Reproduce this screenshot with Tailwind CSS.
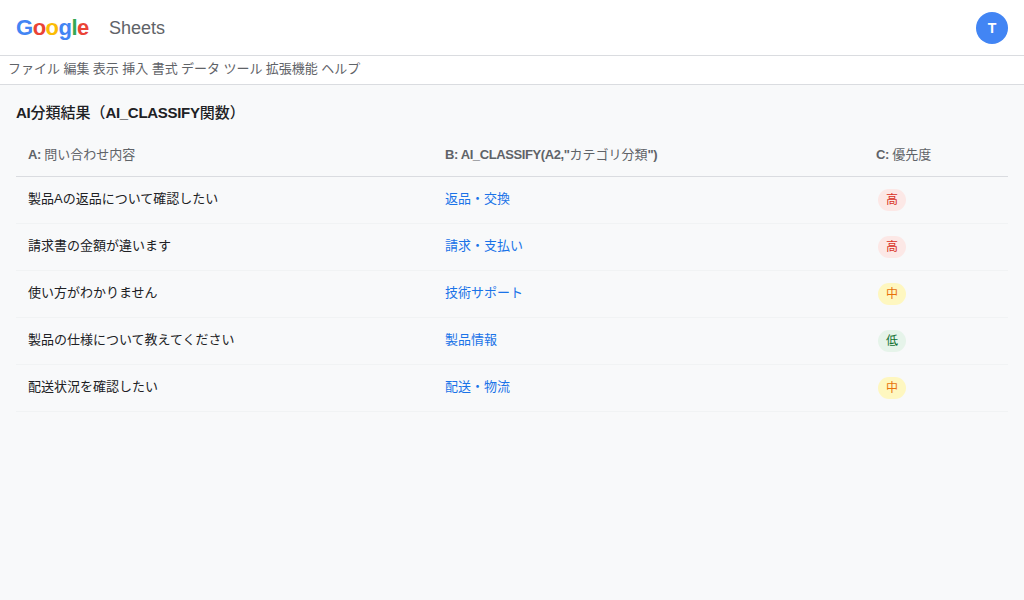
<!DOCTYPE html>
<html lang="ja">
<head>
    <meta charset="UTF-8">
    <meta name="viewport" content="width=device-width, initial-scale=1.0">
    <title>Google Sheets</title>
    <script src="https://cdn.jsdelivr.net/npm/@tailwindcss/browser@4"></script>
</head>
<body class="h-[600px] overflow-hidden bg-[#f8f9fa] font-['Liberation_Sans','Noto_Sans_CJK_JP',sans-serif]">
    <!-- Header -->
    <header class="flex h-14 items-center justify-between border-b border-[#dadce0] bg-white px-4">
        <div class="flex items-center">
            <div class="w-[73px] text-[22px] font-bold tracking-[-0.5px]">
                <span class="text-[#4285f4]">G</span><span class="text-[#ea4335]">o</span><span class="text-[#fbbc05]">o</span><span class="text-[#4285f4]">g</span><span class="text-[#34a853]">l</span><span class="text-[#ea4335]">e</span>
            </div>
            <span class="ml-5 text-lg text-[#5f6368]">Sheets</span>
        </div>
        <div class="flex size-8 items-center justify-center rounded-full bg-[#4285f4] text-sm font-bold text-white">T</div>
    </header>

    <!-- Menu bar -->
    <nav class="flex h-[29px] items-center gap-[3.4px] border-b border-[#dadce0] bg-white px-2 pb-0.5 text-[13px] text-[#5f6368]">
        <span>ファイル</span><span>編集</span><span>表示</span><span>挿入</span><span>書式</span><span>データ</span><span>ツール</span><span>拡張機能</span><span>ヘルプ</span>
    </nav>

    <!-- Results -->
    <main class="px-4 pt-4">
        <h2 class="mb-2 h-6 text-[15px] leading-6 font-medium text-[#202124]"><span class="font-bold tracking-[-0.3px]">AI</span>分類結果（<span class="font-bold tracking-[-0.3px]">AI_CLASSIFY</span>関数）</h2>
        <div class="grid grid-cols-[417px_431px_144px] text-[13px]">
            <div class="flex h-[44px] items-center border-b border-[#dadce0] px-3 text-[#5f6368]"><span class="font-bold whitespace-pre tracking-[-0.4px]">A: </span>問い合わせ内容</div>
            <div class="flex h-[44px] items-center border-b border-[#dadce0] px-3 text-[#5f6368]"><span class="font-bold whitespace-pre tracking-[-0.4px]">B: AI_CLASSIFY(A2,"</span>カテゴリ分類<span class="font-bold tracking-[-0.4px]">")</span></div>
            <div class="flex h-[44px] items-center border-b border-[#dadce0] px-3 text-[#5f6368]"><span class="font-bold whitespace-pre tracking-[-0.4px]">C: </span>優先度</div>

            <div class="flex h-[47px] items-center border-b border-[#f1f3f4] px-3 pb-0.5 text-[#202124]">製品Aの返品について確認したい</div>
            <div class="flex h-[47px] items-center border-b border-[#f1f3f4] px-3 pb-0.5 text-[#1a73e8]">返品・交換</div>
            <div class="flex h-[47px] items-center border-b border-[#f1f3f4] px-3.5"><span class="flex h-[22px] w-7 items-center justify-center rounded-full bg-[#fce8e6] text-xs text-[#d93025]">高</span></div>

            <div class="flex h-[47px] items-center border-b border-[#f1f3f4] px-3 pb-0.5 text-[#202124]">請求書の金額が違います</div>
            <div class="flex h-[47px] items-center border-b border-[#f1f3f4] px-3 pb-0.5 text-[#1a73e8]">請求・支払い</div>
            <div class="flex h-[47px] items-center border-b border-[#f1f3f4] px-3.5"><span class="flex h-[22px] w-7 items-center justify-center rounded-full bg-[#fce8e6] text-xs text-[#d93025]">高</span></div>

            <div class="flex h-[47px] items-center border-b border-[#f1f3f4] px-3 pb-0.5 text-[#202124]">使い方がわかりません</div>
            <div class="flex h-[47px] items-center border-b border-[#f1f3f4] px-3 pb-0.5 text-[#1a73e8]">技術サポート</div>
            <div class="flex h-[47px] items-center border-b border-[#f1f3f4] px-3.5"><span class="flex h-[22px] w-7 items-center justify-center rounded-full bg-[#fef7c0] text-xs text-[#e8710a]">中</span></div>

            <div class="flex h-[47px] items-center border-b border-[#f1f3f4] px-3 pb-0.5 text-[#202124]">製品の仕様について教えてください</div>
            <div class="flex h-[47px] items-center border-b border-[#f1f3f4] px-3 pb-0.5 text-[#1a73e8]">製品情報</div>
            <div class="flex h-[47px] items-center border-b border-[#f1f3f4] px-3.5"><span class="flex h-[22px] w-7 items-center justify-center rounded-full bg-[#e6f4ea] text-xs text-[#137333]">低</span></div>

            <div class="flex h-[47px] items-center border-b border-[#f1f3f4] px-3 pb-0.5 text-[#202124]">配送状況を確認したい</div>
            <div class="flex h-[47px] items-center border-b border-[#f1f3f4] px-3 pb-0.5 text-[#1a73e8]">配送・物流</div>
            <div class="flex h-[47px] items-center border-b border-[#f1f3f4] px-3.5"><span class="flex h-[22px] w-7 items-center justify-center rounded-full bg-[#fef7c0] text-xs text-[#e8710a]">中</span></div>
        </div>
    </main>
</body>
</html>
